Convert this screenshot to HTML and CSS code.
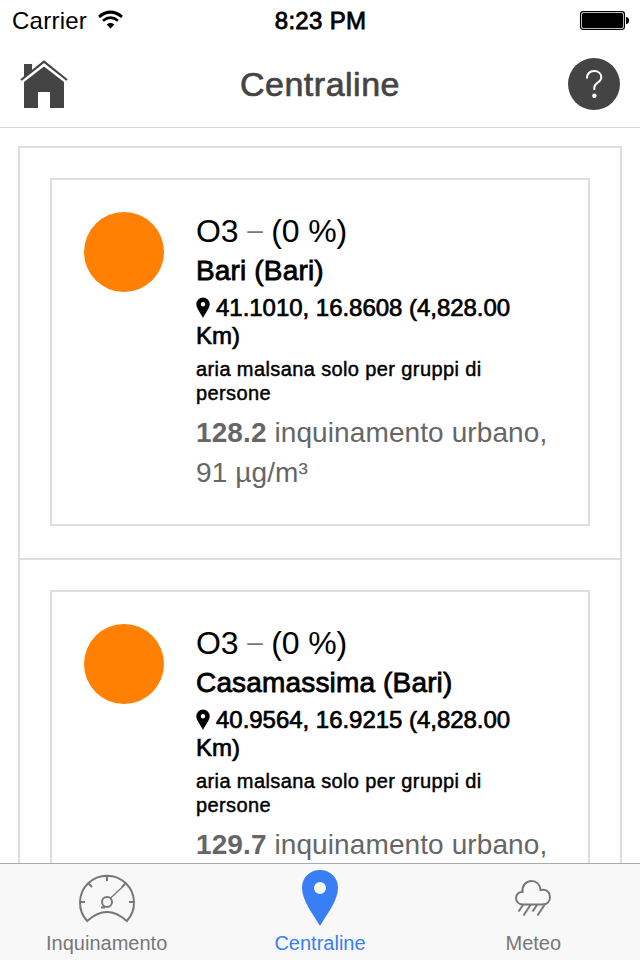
FILE: index.html
```html
<!DOCTYPE html>
<html lang="it">
<head>
<meta charset="utf-8">
<title>Centraline</title>
<link rel="stylesheet" href="styles.css">
</head>
<body>
<div class="screen">
  <div class="status">
    <div class="carrier"><span>Carrier</span>
      <svg width="26" height="20" viewBox="97 10 26 20" fill="none" stroke="#000"><path d="M99 16.8Q110.5 7.4 122 16.8" stroke-width="3"/><path d="M103 20.7Q110.5 14.6 118 20.7" stroke-width="2.7"/><path d="M106.7 24.4Q110.5 21.6 114.3 24.4L110.5 28.5Z" fill="#000" stroke="none"/></svg>
    </div>
    <div class="time">8:23 PM</div>
    <svg class="battery" width="50" height="20" viewBox="579 10 50 20"><rect x="580.6" y="11.6" width="43.8" height="17.8" rx="2.5" fill="none" stroke="#000" stroke-width="1.3"/><rect x="582" y="13" width="41" height="15" rx="1.5"/><path d="M626 17q3 0 3 3.5t-3 3.5z"/></svg>
  </div>
  <header class="header">
    <svg class="home" width="48" height="50" viewBox="20 60 48 50"><path d="M24 64h8v6.5l-8 6.8zM44 66.5 64 82v26H50V92H38v16H24V82z" fill="#444"/><path d="M21 80 44 61.7 67 80" fill="none" stroke="#444" stroke-width="2.2"/></svg>
    <h1>Centraline</h1>
    <svg width="52" height="52" viewBox="568 58 52 52"><circle cx="594" cy="84" r="26" fill="#444"/><path d="M587 78.500C587 73.500 590 71 594.200 71C598.600 71 601.300 73.800 601.300 77.500C601.300 82.500 594.300 82.500 594.300 87.500V90" fill="none" stroke="#fff" stroke-width="2"/><circle cx="594.4" cy="95.7" r="2.2" fill="#fff"/></svg>
  </header>
  <main class="content">
    <div class="list">
      <section class="item">
        <div class="card">
          <div class="dot"></div>
          <div class="info">
            <h2>O3 <span class="dash">–</span> (0 %)</h2>
            <h3>Bari (Bari)</h3>
            <h4><svg class="pin" width="14" height="22" viewBox="0 0 14 22"><path fill-rule="evenodd" d="M7 .5a6.7 6.7 0 0 1 6.7 6.7C13.7 11 9.5 15.8 7 21 4.500 15.800.3 11 .3 7.200A6.700 6.700 0 0 1 7 .5M7 5a2.200 2.200 0 1 0 0 4.400A2.200 2.200 0 0 0 7 5"/></svg><span>41.1010, 16.8608 (4,828.00<br>Km)</span></h4>
            <h5>aria malsana solo per gruppi di<br>persone</h5>
            <p><b>128.2</b> inquinamento urbano,<br>91 µg/m³</p>
          </div>
        </div>
      </section>
      <section class="item">
        <div class="card">
          <div class="dot"></div>
          <div class="info">
            <h2>O3 <span class="dash">–</span> (0 %)</h2>
            <h3>Casamassima (Bari)</h3>
            <h4><svg class="pin" width="14" height="22" viewBox="0 0 14 22"><path fill-rule="evenodd" d="M7 .5a6.7 6.7 0 0 1 6.7 6.7C13.7 11 9.5 15.8 7 21 4.500 15.800.3 11 .3 7.200A6.700 6.700 0 0 1 7 .5M7 5a2.200 2.200 0 1 0 0 4.400A2.200 2.200 0 0 0 7 5"/></svg><span>40.9564, 16.9215 (4,828.00<br>Km)</span></h4>
            <h5>aria malsana solo per gruppi di<br>persone</h5>
            <p><b>129.7</b> inquinamento urbano,</p>
          </div>
        </div>
      </section>
    </div>
  </main>
  <nav class="tabs">
    <a class="tab"><svg width="60" height="60" viewBox="77 868 60 60" fill="none" stroke="#777" stroke-width="2"><path d="M87.200 921A27 27 0 1 1 126.800 921Q107 903 87.200 921ZM107 875v6M80 902h5M129 902h5M88 883l4 4M126 883l-4 4"/><circle cx="107" cy="902" r="5"/><path d="M101 907.500h3l0-2"/><path d="M110 898.500 123 886.500" stroke-width="1.300"/></svg><span>Inquinamento</span></a>
    <a class="tab active"><svg width="60" height="60" viewBox="290 868 60 60"><path fill="#387ef5" fill-rule="evenodd" d="M320 870c10 0 18 7.500 18 17.500C338 900 328.500 912 320 926 311.500 912 302 900 302 887.500 302 877.500 310 870 320 870M320 882a6 6 0 1 0 0 12 6 6 0 0 0 0-12"/></svg><span>Centraline</span></a>
    <a class="tab"><svg width="60" height="60" viewBox="503 868 60 60" fill="none" stroke="#777" stroke-width="2"><path d="M523.500 904.500C518.500 904.500 516 901.500 516 898C516 894.500 519 891.500 522.500 892C521.500 886 526 881 531.500 881C536.500 881 540 884.500 540.500 890C546.500 888.500 550 892.500 550 897C550 901.500 547 904.500 542.500 904.500ZM523 905l-4.500 6.500M530.500 905l-7 10.500M537 905l-4.500 6.500M544.500 905l-7 10.500"/></svg><span>Meteo</span></a>
  </nav>
</div>
</body>
</html>
```
FILE: styles.css
```css
* { box-sizing: border-box; }
body { margin: 0; background: #fff; font-family: "Liberation Sans", Arial, sans-serif; color: #000; }
h1, h2, h3, h4, h5, p { margin: 0; font-weight: 400; white-space: nowrap; }
svg { display: block; flex: none; }
.screen { width: 640px; height: 960px; display: flex; flex-direction: column; overflow: hidden; }
.status { height: 40px; flex: none; display: grid; grid-template-columns: 1fr auto 1fr; align-items: center; padding: 0 11px 0 12px; font-size: 24px; line-height: 40px; }
.carrier { display: flex; align-items: center; gap: 10px; letter-spacing: .25px; }
.carrier span, .time { padding-top: 2px; line-height: 38px; }
.time { letter-spacing: .3px; -webkit-text-stroke: .8px #000; }
.battery { justify-self: end; }
.header { height: 88px; flex: none; display: grid; grid-template-columns: 52px 1fr 52px; align-items: start; padding: 18px 20px 0; border-bottom: 1px solid #d5d5d5; }
.home { margin-top: 2px; }
.header h1 { text-align: center; font-size: 34px; line-height: 52px; letter-spacing: .5px; color: #444; -webkit-text-stroke: .7px #444; }
.content { flex: 1; min-height: 0; overflow: hidden; padding: 18px 18px 0; }
.list { border: 2px solid #ddd; }
.item { padding: 30px 30px 32px; }
.item + .item { border-top: 2px solid #ddd; }
.card { border: 2px solid #ddd; height: 348px; padding: 32px; display: flex; gap: 32px; }
.dot { width: 80px; height: 80px; border-radius: 50%; background: #ff8003; flex: none; }
.info h2 { font-size: 32px; line-height: 38px; letter-spacing: -.15px; }
.dash { display: inline-block; color: #777; font-size: 28px; line-height: 30px; vertical-align: 3px; }
.info h3 { font-size: 28px; line-height: 36px; margin-top: 3px; letter-spacing: .16px; -webkit-text-stroke: .8px #000; }
.info h4 { font-size: 24px; line-height: 28px; margin-top: 5px; letter-spacing: -.03px; -webkit-text-stroke: .7px #000; }
.pin { display: inline-block; vertical-align: -3px; margin-right: 6px; }
.info h5 { font-size: 20px; line-height: 24px; margin-top: 7px; letter-spacing: .39px; -webkit-text-stroke: .45px #000; }
.info p { font-size: 28px; line-height: 40px; margin-top: 8px; letter-spacing: .1px; color: #666; }
.tabs { height: 97px; flex: none; display: grid; grid-template-columns: repeat(3, 1fr); background: #f8f8f8; border-top: 1px solid #aaa; }
.tab { display: flex; flex-direction: column; align-items: center; padding-top: 4px; color: #777; font-size: 20px; line-height: 24px; }
.tab span { margin-top: 3px; }
.tab.active { color: #387ef5; }
```
